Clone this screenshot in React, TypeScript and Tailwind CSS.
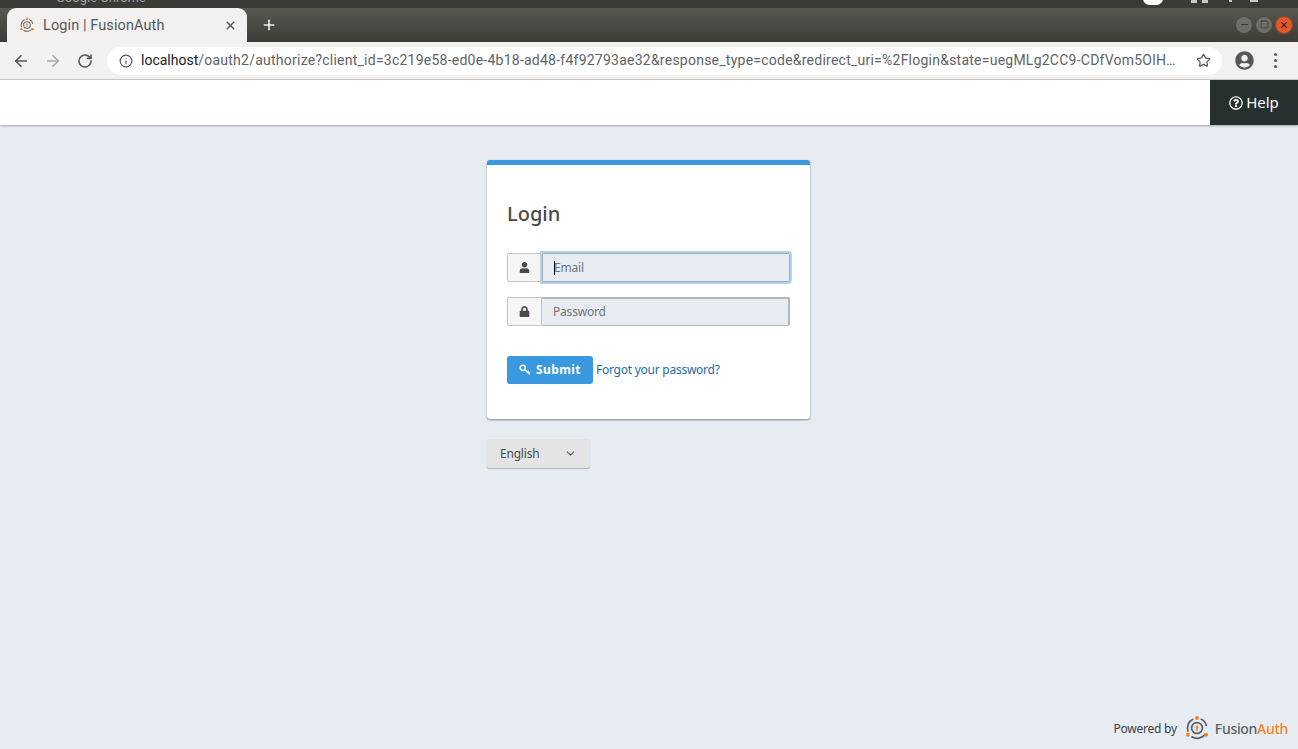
import { ArrowLeft, ArrowRight, RotateCw, Info, Star, Plus, X, Minus, Square, ChevronDown } from 'lucide-react';
import { FaUser, FaLock, FaUserCircle, FaRegQuestionCircle } from 'react-icons/fa';

// FusionAuth mark: broken ring with orange dots and keyhole
const FusionLogo = ({ size = 24, stroke = '#5a6266' }: { size?: number; stroke?: string }) => (
  <svg width={size} height={size} viewBox="0 0 24 24" fill="none">
    <path d="M3.9 15.4A9 9 0 0 1 8.6 3.7" stroke={stroke} strokeWidth="1.6" />
    <path d="M15.4 3.7a9 9 0 0 1 5.4 6.6" stroke={stroke} strokeWidth="1.6" />
    <path d="M19.8 17.6a9.4 9.4 0 0 1-13 2.2" stroke={stroke} strokeWidth="1.6" />
    <circle cx="12" cy="12" r="5" stroke={stroke} strokeWidth="1.6" />
    <circle cx="12" cy="2.8" r="1.8" fill="#f58320" />
    <circle cx="3.6" cy="18.2" r="1.8" fill="#f58320" />
    <circle cx="20.4" cy="18.2" r="1.8" fill="#f58320" />
    <circle cx="12" cy="11" r="1.4" fill="#f58320" />
    <rect x="11.3" y="11.5" width="1.4" height="3.2" fill="#f58320" />
  </svg>
);

const BrowserChrome = () => (
  <div className="flex flex-col font-['Roboto','Noto_Sans',sans-serif]">
    {/* sliver of the desktop top bar */}
    <div className="h-2 bg-[#3b3a36] overflow-hidden flex items-end relative">
      <span className="ml-[56px] text-[13px] leading-[13px] text-[#a5a49e] mb-[4px]">Google Chrome</span>
      <span className="absolute left-[1143px] -top-[8px] w-[20px] h-[13px] rounded-full bg-white" />
      <span className="absolute left-[1191px] top-0 w-[6px] h-[3px] bg-[#c9c8c3]" />
      <span className="absolute left-[1202px] top-0 w-[6px] h-[3px] bg-[#c9c8c3]" />
      <span className="absolute left-[1229px] top-0 w-[3px] h-[2px] bg-[#c9c8c3]" />
      <span className="absolute left-[1250px] top-0 w-[8px] h-[2px] bg-[#c9c8c3]" />
    </div>

    {/* tab strip */}
    <div className="h-[34px] bg-gradient-to-b from-[#5a5850] to-[#3c3b37] flex items-end pl-[7px] pr-[5px]">
      <div className="w-[240px] h-[34px] bg-[#f2f1f0] rounded-t-[9px] flex items-center pl-[12px] pr-[10px]">
        <FusionLogo size={16} stroke="#6a6a6a" />
        <span className="ml-[8px] pt-[1px] text-[14.5px] text-[#55575a] flex-1 tracking-[0.1px]">Login | FusionAuth</span>
        <X size={13} strokeWidth={2.6} className="text-[#55575a]" />
      </div>
      <div className="ml-[14px] h-[34px] flex items-center">
        <Plus size={16} strokeWidth={2.4} className="text-[#f2f1f0]" />
      </div>
      <div className="ml-auto h-[34px] flex items-center gap-[2px] pb-[1px]">
        <span className="w-[18px] h-[18px] rounded-full bg-[#6e6d68] border border-[#48473f] flex items-center justify-center">
          <Minus size={11} strokeWidth={2} className="text-[#33322e]" />
        </span>
        <span className="w-[18px] h-[18px] rounded-full bg-[#6e6d68] border border-[#48473f] flex items-center justify-center">
          <Square size={9} strokeWidth={2} className="text-[#33322e]" />
        </span>
        <span className="w-[18px] h-[18px] rounded-full bg-[#e2582a] border border-[#8a4a30] flex items-center justify-center">
          <X size={10} strokeWidth={2.6} className="text-[#4a2a1c]" />
        </span>
      </div>
    </div>

    {/* toolbar */}
    <div className="h-[38px] bg-[#f2f1f0] border-b border-[#c9c9c9] flex items-center pl-[12px] pr-[13px]">
      <ArrowLeft size={18} strokeWidth={2.2} className="text-[#55575a]" />
      <ArrowRight size={18} strokeWidth={2.2} className="ml-[14px] text-[#a9a9a9]" />
      <RotateCw size={16} strokeWidth={2.4} className="ml-[15px] text-[#55575a]" />
      <div className="ml-[14px] w-[1115px] h-[28px] bg-white rounded-full flex items-center pl-[12px] pr-[10px]">
        <Info size={14} strokeWidth={2} className="text-[#55575a] shrink-0" />
        <div className="ml-[8px] flex-1 text-[14px] whitespace-nowrap overflow-hidden">
          <span className="text-[#202124]">localhost</span>
          <span className="text-[#5f6368] tracking-[0.24px]">/oauth2/authorize?client_id=3c219e58-ed0e-4b18-ad48-f4f92793ae32&amp;response_type=code&amp;redirect_uri=%2Flogin&amp;state=uegMLg2CC9-CDfVom5OlH…</span>
        </div>
        <Star size={15} strokeWidth={2} className="ml-[9px] mr-[1px] text-[#55575a] shrink-0" />
      </div>
      <FaUserCircle size={19} className="ml-[13px] text-[#55575a] shrink-0" />
      <div className="ml-[20px] flex flex-col gap-[3px] shrink-0">
        <span className="w-[3px] h-[3px] rounded-full bg-[#55575a]" />
        <span className="w-[3px] h-[3px] rounded-full bg-[#55575a]" />
        <span className="w-[3px] h-[3px] rounded-full bg-[#55575a]" />
      </div>
    </div>
  </div>
);

const InputRow = ({ icon, placeholder, focused }: { icon: React.ReactNode; placeholder: string; focused?: boolean }) => (
  <div className="flex h-[29px]">
    <div className="w-[35px] bg-[#f6f6f6] border border-[#c4c4c4] rounded-l-[2px] flex items-center justify-center text-[#4a4a4a]">
      {icon}
    </div>
    {focused ? (
      <div className="w-[248px] bg-[#e7ecf3] border border-[#a9a9a9] rounded-r-[2px] flex items-center pl-[11px] text-[12px] tracking-[-0.2px] text-[#6f7479] outline-2 outline-[#aed3ef]">
        <span className="w-px h-[14px] bg-black -mr-px" />
        {placeholder}
      </div>
    ) : (
      <div className="w-[248px] bg-[#e7ecf3] border-t-2 border-r-2 border-b border-[#b4b5b7] rounded-r-[2px] flex items-center pl-[11px] text-[12px] tracking-[-0.2px] text-[#6f7479]">
        {placeholder}
      </div>
    )}
  </div>
);

export default function App() {
  return (
    <div className="h-screen flex flex-col bg-[#e7ecf3] overflow-hidden font-['Noto_Sans','Open_Sans',sans-serif]">
      <BrowserChrome />

      <header className="h-[45px] shrink-0 bg-white shadow-[0_1px_2px_rgba(0,0,0,0.3)] flex justify-end">
        <div className="w-[88px] bg-[#25302f] text-white flex items-center justify-center gap-[3px] text-[15px]">
          <FaRegQuestionCircle size={14} />
          Help
        </div>
      </header>

      <main className="flex-1 flex flex-col items-center pt-[35px]">
        <div className="w-[323px] -ml-[1px]">
          <div className="h-[259px] bg-white border-t-[5px] border-[#3a98de] rounded-[3px] shadow-[0_1px_2px_rgba(0,0,0,0.45)] px-[20px] pt-[35px]">
            <h1 className="text-[20px] leading-[28px] font-medium text-[#4a4a4a]">Login</h1>
            <div className="mt-[25px] flex flex-col gap-[15px]">
              <InputRow icon={<FaUser size={11} />} placeholder="Email" focused />
              <InputRow icon={<FaLock size={11} />} placeholder="Password" />
            </div>
            <div className="mt-[30px] flex items-center">
              <button className="w-[86px] h-[28px] bg-[#3a98de] rounded-[3px] text-white text-[12px] font-bold tracking-[0.4px] flex items-center justify-center gap-[5px]">
                <svg width="12" height="12" viewBox="0 0 12 12" fill="none" stroke="white">
                  <circle cx="3.8" cy="3.8" r="2.6" strokeWidth="1.5" />
                  <path d="M5.8 5.8 10.8 10.2M8.2 8 9.6 6.8M9.8 9.4 11 8.2" strokeWidth="1.5" />
                </svg>
                Submit
              </button>
              <a className="ml-[3px] text-[12px] tracking-[-0.25px] text-[#1c6ca8]">Forgot your password?</a>
            </div>
          </div>

          <div className="mt-[20px] w-[103px] h-[29px] bg-[#e4e4e4] rounded-[2px] shadow-[0_1px_1px_rgba(0,0,0,0.25)] flex items-center justify-between pl-[13px] pr-[13px] text-[12px] tracking-[-0.2px] text-[#4a4a4a]">
            English
            <ChevronDown size={13} className="text-[#5a5a5a]" />
          </div>
        </div>

        <footer className="mt-auto w-full flex justify-end items-center pr-[10px] pb-[8px] gap-[7px] text-[12px] tracking-[-0.25px] text-[#3a3f45]">
          <span className="pt-[2px]">Powered by</span>
          <FusionLogo size={26} />
          <span className="-ml-[2px] pt-[1px] text-[14px] tracking-[-0.3px] font-medium text-[#5a6266]">
            Fusion<span className="text-[#f58320]">Auth</span>
          </span>
        </footer>
      </main>
    </div>
  );
}
